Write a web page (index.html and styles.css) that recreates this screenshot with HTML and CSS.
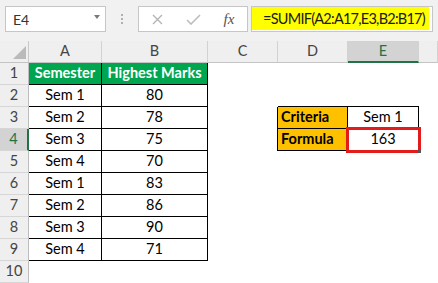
FILE: index.html
```html
<!DOCTYPE html>
<html lang="en">
<head>
    <meta charset="UTF-8">
    <meta name="viewport" content="width=device-width, initial-scale=1.0">
    <title>SUMIF Example</title>
    <link rel="stylesheet" href="styles.css">
</head>
<body>
    <div class="toolbar">
        <div class="name-box"><span>E4</span><span class="caret"></span></div>
        <div class="grip"><i></i><i></i><i></i></div>
        <div class="fx-buttons">
            <span class="btn">
                <svg width="11" height="11" viewBox="0 0 11 11"><path d="M1 1L10 10M10 1L1 10" stroke="#b4b4b4" stroke-width="1.4" fill="none"/></svg>
            </span>
            <span class="btn">
                <svg width="15" height="11" viewBox="0 0 15 11"><path d="M1 6L5 10L14 1" stroke="#bdbdbd" stroke-width="1.6" fill="none"/></svg>
            </span>
            <span class="btn fx">fx</span>
        </div>
        <div class="formula"><span class="formula-text">=SUMIF(A2:A17,E3,B2:B17)</span></div>
    </div>

    <div class="sheet">
        <div class="corner"><span class="select-all"></span></div>
        <div class="colhead">A</div>
        <div class="colhead">B</div>
        <div class="colhead">C</div>
        <div class="colhead">D</div>
        <div class="colhead on">E</div>
        <div class="colhead"></div>

        <div class="rowhead">1</div>
        <div class="tb head">Semester</div>
        <div class="tb head">Highest Marks</div>
        <div></div><div></div><div></div><div></div>

        <div class="rowhead">2</div>
        <div class="tb">Sem 1</div>
        <div class="tb">80</div>
        <div></div><div class="bb"></div><div class="bb"></div><div></div>

        <div class="rowhead">3</div>
        <div class="tb">Sem 2</div>
        <div class="tb">78</div>
        <div class="br"></div>
        <div class="tb crit">Criteria</div>
        <div class="tb">Sem 1</div>
        <div></div>

        <div class="rowhead on">4</div>
        <div class="tb">Sem 3</div>
        <div class="tb">75</div>
        <div class="br"></div>
        <div class="tb crit">Formula</div>
        <div class="tb picked">163</div>
        <div></div>

        <div class="rowhead">5</div>
        <div class="tb">Sem 4</div>
        <div class="tb">70</div>
        <div></div><div></div><div></div><div></div>

        <div class="rowhead">6</div>
        <div class="tb">Sem 1</div>
        <div class="tb">83</div>
        <div></div><div></div><div></div><div></div>

        <div class="rowhead">7</div>
        <div class="tb">Sem 2</div>
        <div class="tb">86</div>
        <div></div><div></div><div></div><div></div>

        <div class="rowhead">8</div>
        <div class="tb">Sem 3</div>
        <div class="tb">90</div>
        <div></div><div></div><div></div><div></div>

        <div class="rowhead">9</div>
        <div class="tb">Sem 4</div>
        <div class="tb">71</div>
        <div></div><div></div><div></div><div></div>

        <div class="rowhead">10</div>
        <div></div><div></div><div></div><div></div><div></div><div></div>
    </div>
</body>
</html>
```

FILE: styles.css
```css
:root {
    --header-bg: #efefef;
    --header-active: #d3d3d3;
    --excel-green: #217346;
    --table-green: #00a550;
    --orange: #ffc000;
    --red: #e31b1b;
}

body {
    margin: 0;
    width: 438px;
    height: 283px;
    overflow: hidden;
    font-family: Lato, "Liberation Sans", sans-serif;
    background: #fff;
}

/* formula bar */
.toolbar {
    display: flex;
    align-items: flex-start;
    height: 41px;
    padding: 6px 5px 0;
    box-sizing: border-box;
    background: #f1f1f1;
}

.name-box {
    flex-shrink: 0;
    width: 101px;
    height: 26px;
    box-sizing: border-box;
    border: 1px solid #c6c6c6;
    background: #fff;
    display: flex;
    align-items: center;
    justify-content: space-between;
    padding: 0 5px 0 7px;
    font-size: 14px;
    color: #333;
}

.caret {
    border-left: 3.5px solid transparent;
    border-right: 3.5px solid transparent;
    border-top: 4px solid #7a7a7a;
    margin-top: -5px;
}

.grip {
    flex-shrink: 0;
    width: 32px;
    height: 26px;
    display: flex;
    flex-direction: column;
    align-items: center;
    justify-content: center;
    gap: 2px;
}

.grip i {
    width: 2px;
    height: 2px;
    background: #b0b0b0;
}

.fx-buttons {
    flex-shrink: 0;
    width: 110px;
    height: 26px;
    box-sizing: border-box;
    border: 1px solid #c6c6c6;
    background: #fff;
    display: flex;
    align-items: center;
}

.btn {
    width: 36px;
    display: flex;
    justify-content: center;
    align-items: center;
}

.fx {
    font-family: "Liberation Serif", serif;
    font-style: italic;
    font-size: 15px;
    color: #555;
}

.formula {
    flex: 1;
    min-width: 0;
    margin-left: 3px;
    height: 26px;
    box-sizing: border-box;
    border: 1px solid #c6c6c6;
    background: #fff;
    padding: 0 3px 1px 0;
    display: flex;
    overflow: hidden;
}

.formula-text {
    flex: 1;
    background: #ffff00;
    padding-left: 11px;
    font-size: 14.5px;
    letter-spacing: -0.75px;
    line-height: 23px;
    color: #1a1a1a;
    white-space: nowrap;
}

/* worksheet */
.sheet {
    display: grid;
    grid-template-columns: 29px 73px 106px 70px 70px 71px 1fr;
    grid-auto-rows: 22px;
    font-size: 14.5px;
    color: #000;
}

.sheet > div {
    box-sizing: border-box;
    display: flex;
    align-items: center;
    justify-content: center;
    line-height: 1;
    white-space: nowrap;
}

.corner {
    background: var(--header-bg);
    border-right: 1px solid #c8c8c8;
    border-bottom: 1px solid #c4c4c4;
}

.sheet > .corner {
    align-items: flex-end;
    justify-content: flex-end;
    padding: 0 2px 3px 0;
}

.select-all {
    width: 13px;
    height: 13px;
    background: #bababa;
    clip-path: polygon(100% 0, 100% 100%, 0 100%);
}

.colhead {
    background: var(--header-bg);
    border-right: 1px solid #d2d2d2;
    border-bottom: 1px solid #c4c4c4;
    color: #444;
}

.colhead.on {
    background: var(--header-active);
    color: var(--excel-green);
    border-bottom: 2px solid var(--excel-green);
}

.rowhead {
    background: var(--header-bg);
    border-right: 1px solid #bdbdbd;
    border-bottom: 1px solid #d6d6d6;
    color: #444;
}

.rowhead.on {
    background: var(--header-active);
    color: var(--excel-green);
    border-right: 2px solid var(--excel-green);
}

.tb {
    border-right: 1px solid #000;
    border-bottom: 1px solid #000;
}

.bb {
    border-bottom: 1px solid #000;
}

.br {
    border-right: 1px solid #000;
}

.head {
    background: var(--table-green);
    color: #fff;
    font-weight: 700;
}

.sheet > .crit {
    background: var(--orange);
    font-weight: 700;
    justify-content: flex-start;
    padding-left: 3px;
}

.picked {
    position: relative;
    z-index: 1;
    outline: 3px solid var(--red);
    outline-offset: -1px;
}

.picked::after {
    content: "";
    position: absolute;
    right: -3px;
    bottom: -3px;
    width: 3px;
    height: 3px;
    background: #555;
}
```
